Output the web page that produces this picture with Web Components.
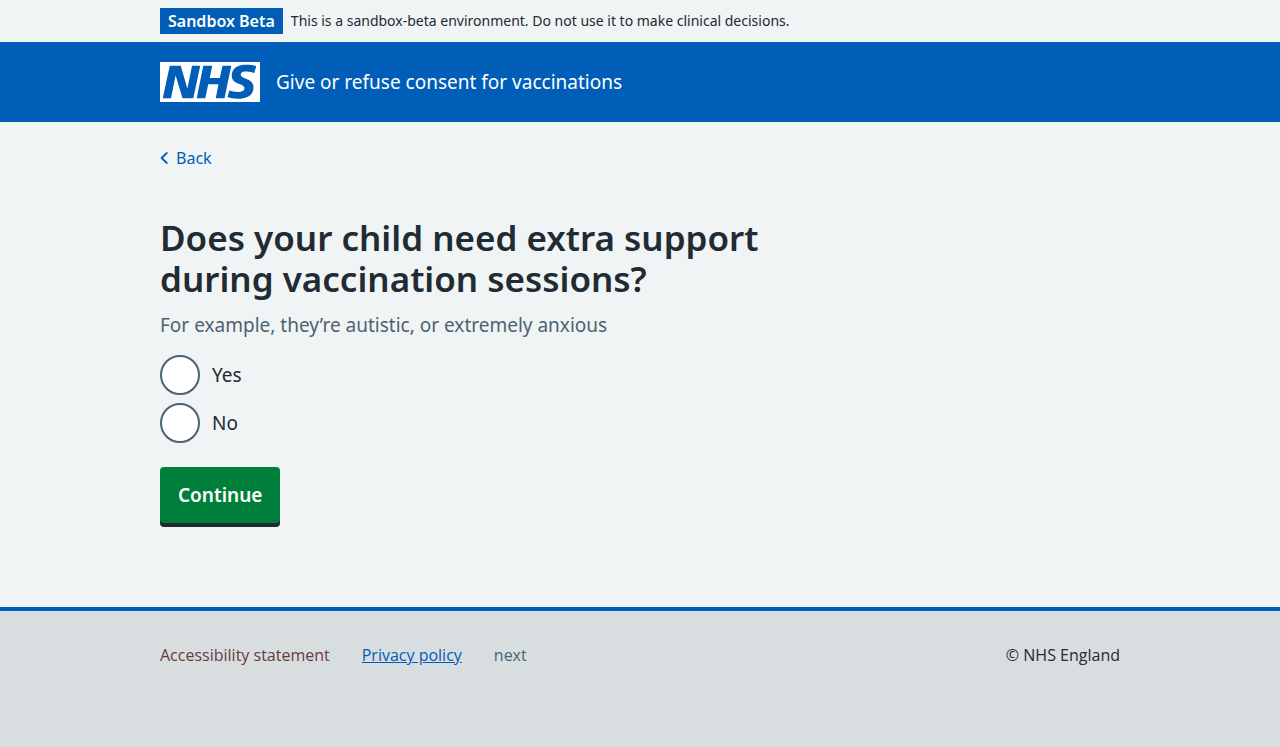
<!DOCTYPE html>
<html lang="en">
<head>
<meta charset="utf-8">
<meta name="viewport" content="width=device-width, initial-scale=1">
<title>Does your child need extra support during vaccination sessions?</title>
<style>
  html { height: 100%; }
  body {
    margin: 0;
    min-height: 100%;
    display: flex;
    flex-direction: column;
    background: #d8dde0;
    color: #212b32;
    font-family: "Noto Sans", "Open Sans", sans-serif;
    --blue: #005eb8;
    --green: #007f3b;
    --grey: #4c6272;
    --text: #212b32;
    --page-width: 960px;
  }
</style>
</head>
<body>
<environment-banner label="Sandbox Beta">This is a sandbox-beta environment. Do not use it to make clinical decisions.</environment-banner>
<service-header>Give or refuse consent for vaccinations</service-header>
<page-main>
  <back-link slot="before">Back</back-link>
  <radio-question name="support">
    <span slot="legend">Does your child need extra support during vaccination sessions?</span>
    <span slot="hint">For example, they’re autistic, or extremely anxious</span>
    <radio-item name="support" value="yes">Yes</radio-item>
    <radio-item name="support" value="no">No</radio-item>
  </radio-question>
  <primary-button>Continue</primary-button>
</page-main>
<service-footer></service-footer>

<script>
const define = (name, html) => {
  const template = document.createElement("template");
  template.innerHTML = html;
  customElements.define(name, class extends HTMLElement {
    constructor() {
      super();
      this.attachShadow({ mode: "open" }).append(template.content.cloneNode(true));
    }
    connectedCallback() {
      const label = this.shadowRoot.querySelector("[data-label]");
      if (label) label.textContent = this.getAttribute("label");
      const input = this.shadowRoot.querySelector("input");
      if (input) {
        input.name = this.getAttribute("name");
        input.value = this.getAttribute("value");
        input.addEventListener("change", () => {
          for (const item of this.parentElement.querySelectorAll("radio-item")) {
            if (item !== this) item.shadowRoot.querySelector("input").checked = false;
          }
        });
      }
    }
  });
};

const container = `
  .container { box-sizing: border-box; max-width: var(--page-width); margin: 0 auto; }
  @media (max-width: 1020px) { .container { margin: 0 32px; } }
`;

define("environment-banner", `
<style>
  :host { display: block; background: #f0f4f5; padding: 8px 0; }
  ${container}
  .container { display: flex; align-items: center; gap: 8px; font-size: 14px; line-height: 24px; }
  strong { background: var(--blue); color: #fff; font-size: 16px; font-weight: 600; line-height: 26px; padding: 0 8px; white-space: nowrap; }
</style>
<div class="container"><strong data-label></strong><span><slot></slot></span></div>`);

define("service-header", `
<style>
  :host { display: block; background: var(--blue); color: #fff; padding: 20px 0; }
  ${container}
  a { display: flex; align-items: center; gap: 16px; color: inherit; text-decoration: none; font-size: 19px; line-height: 28px; }
  svg { display: block; flex: none; }
</style>
<header class="container"><a href="#">
  <svg width="100" height="40" viewBox="0 0 200 80" role="img" aria-label="NHS"><path fill="#fff" d="M200 0v80H0V0h200Zm-27.5 5.5c-14.5 0-29 5-29 22 0 10.2 7.7 13.5 14.7 16.3l.7.3c5.4 2 10.1 3.9 10.1 8.4 0 6.5-8.5 7.5-14 7.5s-12.5-1.5-16-3.5L135 70c5.5 2 13.5 3.5 20 3.5 15.5 0 32-4.5 32-22.5 0-19.5-25.5-16.5-25.5-25.5 0-5.5 5.5-6.5 12.5-6.5a35 35 0 0 1 14.5 3l4-13.5c-4.5-2-12-3-20-3Zm-131 2h-22l-14 65H22l9-45h.5l13.5 45h21.5l14-65H64l-9 45h-.5l-13-45Zm63 0h-18l-13 65h17l6-28H117l-5.5 28H129l13.5-65H125L119.5 32h-20l5-24.5Z"/></svg>
  <span><slot></slot></span></a></header>`);

define("page-main", `
<style>
  :host { display: block; background: #f0f4f5; }
  ${container}
  .before { padding-top: 24px; }
  main { padding: 47px 0 80px; max-width: 640px; }
</style>
<div class="container">
  <div class="before"><slot name="before"></slot></div>
  <main><slot></slot></main>
</div>`);

define("back-link", `
<style>
  :host { display: block; }
  a { display: inline-flex; align-items: center; gap: 8px; color: var(--blue); text-decoration: none; font-size: 16px; line-height: 24px; vertical-align: top; }
</style>
<a href="#"><svg width="8" height="14" viewBox="0 0 8 14" aria-hidden="true"><path d="M6.8 2 1.6 7l5.2 5" fill="none" stroke="currentColor" stroke-width="1.8" stroke-linecap="round" stroke-linejoin="round"/></svg><slot></slot></a>`);

define("radio-question", `
<style>
  :host { display: block; }
  fieldset { border: 0; margin: 0; padding: 0; min-width: 0; }
  legend { padding: 0; margin: 0 0 12px; }
  h1 { margin: 0; font-size: 35px; font-weight: 600; line-height: 41px; }
  .hint { color: var(--grey); font-size: 19px; line-height: 28px; margin-bottom: 16px; }
  .items { display: grid; gap: 8px; }
</style>
<fieldset aria-describedby="hint">
  <legend><h1><slot name="legend"></slot></h1></legend>
  <div class="hint" id="hint"><slot name="hint"></slot></div>
  <div class="items"><slot></slot></div>
</fieldset>`);

define("radio-item", `
<style>
  :host { display: flex; align-items: center; gap: 12px; font-size: 19px; line-height: 28px; }
  input { appearance: none; box-sizing: border-box; width: 40px; height: 40px; margin: 0; border: 2px solid var(--grey); border-radius: 50%; background: #fff; flex: none; }
  input:checked { background: radial-gradient(var(--text) 10px, #fff 11px); }
  input:focus-visible { outline: 4px solid #ffeb3b; }
</style>
<input type="radio" id="option"><label for="option"><slot></slot></label>`);

define("primary-button", `
<style>
  :host { display: block; margin-top: 24px; }
  button { display: block; border: 0; border-radius: 4px; margin: 0 0 4px; padding: 14px 18px; background: var(--green); color: #fff; box-shadow: 0 4px 0 var(--text); font-family: inherit; font-size: 19px; font-weight: 600; line-height: 28px; cursor: pointer; }
</style>
<button type="submit"><slot></slot></button>`);

define("service-footer", `
<style>
  :host { display: block; flex: 1; border-top: 4px solid var(--blue); background: #d8dde0; font-family: "Open Sans", "Noto Sans", sans-serif; font-size: 16px; line-height: 24px; }
  ${container}
  .container { display: flex; justify-content: space-between; flex-wrap: wrap; gap: 16px 32px; padding: 32px 0; }
  ul { display: flex; flex-wrap: wrap; gap: 8px 32px; margin: 0; padding: 0; list-style: none; }
  a { color: var(--grey); text-decoration: none; }
  .statement { color: #663c3c; }
  .policy { color: var(--blue); text-decoration: underline; }
  p { margin: 0; }
</style>
<footer class="container">
  <ul>
    <li><a class="statement" href="#">Accessibility statement</a></li>
    <li><a class="policy" href="#">Privacy policy</a></li>
    <li><a href="#">next</a></li>
  </ul>
  <p>© NHS England</p>
</footer>`);
</script>
</body>
</html>
